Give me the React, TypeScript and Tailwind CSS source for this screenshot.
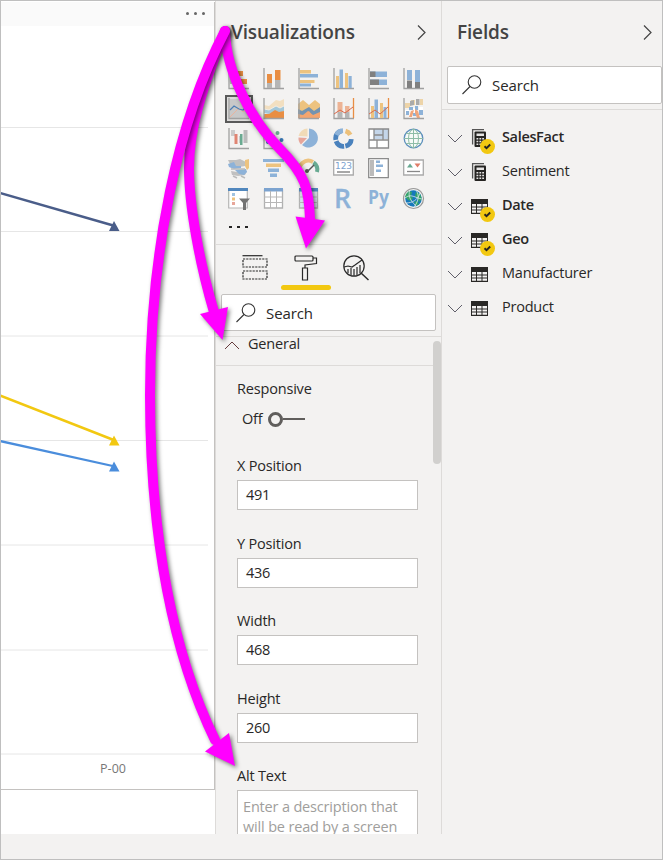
import React from "react";

const AXIS = "M1 0V20.500H21";

function Frame({ children }: { children: React.ReactNode }) {
  return (
    <svg width="22" height="22" viewBox="0 0 22 22" fill="none" className="overflow-visible">
      {children}
    </svg>
  );
}

function Axis() {
  return <path d={AXIS} stroke="#a0a0a0" strokeWidth="1.300" />;
}

const B = "#8db2d8";
const O = "#e98e43";
const Y = "#edc37f";
const G = "#b5b5b5";

const visuals: React.ReactNode[] = [
  <><Axis /><path d="M2 3h13v5H2zM2 11h17v5H2z" fill={O} /><path d="M2 3h6v5H2zM2 11h7v5H2z" fill={G} /></>,
  <><Axis /><path d="M4 6h5v9H4zM12 2h5.500v10H12z" fill={O} /><path d="M4 15h5v5H4zM12 12h5.500v8H12z" fill={G} /></>,
  <><Axis /><path d="M2 2h11v3.500H2zM2 12h14.500v3H2z" fill={Y} /><path d="M2 6h18v3.500H2zM2 15.500h11v3H2z" fill={B} /></>,
  <><Axis /><path d="M3 8h3v12H3zM12 5h3v15h-3z" fill={Y} /><path d="M6.500 1.500H10V20H6.500zM15.500 8h3.200v12h-3.200z" fill={B} /></>,
  <><Axis /><path d="M2 3.500h17V9H2zM2 11.500h17V17H2z" fill={B} /><path d="M2 3.500h5.500V9H2zM2 11.500h9V17H2z" fill="#808080" /></>,
  <><Axis /><path d="M4 2h5v10H4zM12 2h5v12h-5z" fill={B} /><path d="M4 12.500h5V20H4zM12 14h5v6h-5z" fill="#808080" /></>,
  <><path d="M2 1h20v19H2z" fill="#c8c8c8" /><Axis /><path d="M2 19L11 10l4 4 6-7" stroke="#e9b39e" /><path d="M2 12l4-4 5 3 4 1 6-6" stroke="#4c7fb5" strokeWidth="1.200" /></>,
  <><path d="M1 7l5 1 7-6 4 1 4-2v8l-4 2-5-1-6 3-5-1z" fill="#f2dfc0" /><path d="M1 11l5 1 7-4 4 2 4-2v5l-4 2-5-1-6 2-5-1z" fill="#a3c7d8" /><path d="M1 16l5 0 6-4 4 2 5-1v7H1z" fill={O} /><path d="M1 11l5 1 7-4 4 2 4-2" stroke="#f6f3ee" strokeWidth=".8" /><Axis /></>,
  <><path d="M0 6l5-4 6 5 6-5 5 4v11H0z" fill={Y} /><path d="M0 11l4 2 7-4 5 4 6-4v9H0z" fill="#7393b0" /><path d="M0 16l5 1 5-4 5 4 7-3v6H0z" fill="#f4a56e" /><path d="M4 20l7-7 5 7z" fill="#f4a56e" /><Axis /></>,
  <><Axis /><path d="M4.500 4h5v10h-5zM12 8h4.500v6H12z" fill="#edb394" /><path d="M4.500 14h5v6h-5zM12 14h4.500v6H12z" fill={G} /><path d="M20.500 0v20" stroke={O} strokeWidth="1.300" /><path d="M1 16l6-4 5 3 8-6" stroke="#d7694d" /></>,
  <><Axis /><path d="M3 8h3v12H3zM12 5h3v15h-3z" fill={Y} /><path d="M6.500 1.500H10V20H6.500zM15.500 9h3v11h-3z" fill={B} /><path d="M20.500 0v20" stroke={O} strokeWidth="1.300" /><path d="M1 16l6-4 5 4 8-7" stroke="#d7694d" /></>,
  <><path d="M2 5h5v5H2zM8 2h4v5H8zM17 1h3v6h-3z" fill="#edd4a8" /><path d="M7 3l4-1v5L7 8zM13 1h3.500v6H13z" fill="#aaa" /><path d="M2 12h4v4H2zM10 10h4v5h-4zM16 9h4v4h-4zM6 16h4v4H6z" fill="#fff" /><path d="M6 9h4v3H6zM12 8h3v4h-3zM3 13h3v4H3zM16 12h4v5h-4zM10 15h3v3h-3z" fill={B} /><path d="M12 11l3 2 2 7h-3l-2-5zM8 13l3-1-2 7H6z" fill="#f0a57a" /><Axis /></>,
  <><Axis /><path d="M3 2h4v6H3zM11 8h3v7h-3z" fill="#ccc" /><path d="M6.500 6h3v10h-3z" fill="#e08573" /><path d="M15.500 2h4v13h-4z" fill="#bbb" /><path d="M12 6h2.500v11H12z" fill="#6aaa91" /></>,
  <><Axis /><g fill="#3978b6"><circle cx="5" cy="14" r="2" /><circle cx="10" cy="9" r="2" /><circle cx="18.500" cy="12" r="2" /><circle cx="10" cy="17" r="1.500" /></g><circle cx="14.500" cy="5" r="2" fill="#6aaa91" /></>,
  <><path d="M11 10V.500A9.500 9.500 0 1 1 4 17z" fill={B} /><path d="M9.500 8.500V.500A9.500 9.500 0 0 0 .5 8z" fill="#f1dbb7" /><path d="M9 10L.5 9.500A9 9 0 0 0 3 16.500z" fill="#e7a69a" /></>,
  <g fill="none" strokeWidth="4.800">
    <circle cx="10.500" cy="10.500" r="7.800" stroke="#4a82bd" pathLength="100" strokeDasharray="20 2.500 21 2.500 23 2.500 0 28.500" transform="rotate(4 10.500 10.500)" />
    <path d="M3.500 7A7.800 7.800 0 0 1 10 2.700" stroke={B} />
    <path d="M12.500 3A7.800 7.800 0 0 1 17.300 6.800" stroke="#ecc07a" />
  </g>,
  <><path d="M1 1h19v19H1z" fill="#fff" /><path d="M6 1h14v10H6z" fill="#c4d6ea" /><path d="M1 1h19.500v19H1zM6 1v11M1 12h19.500M9 12v8M15 1v11M6 7h9" stroke="#8b8b8b" strokeWidth="1.300" /></>,
  <><circle cx="10.500" cy="10.500" r="9.300" fill="#f7faf8" stroke="#5d8fbe" strokeWidth="1.300" /><path d="M10.500 1v19M1 10.500h19M3 5.500h15M3 15.500h15" stroke="#8ebda7" /><ellipse cx="10.500" cy="10.500" rx="5" ry="9.200" stroke="#8ebda7" /></>,
  <><path d="M0 2h8l4-1 6 3-1 4-6 1-8-1zM3 13l6 1 10-1-2 4-7 1-6-1z" fill="#c0c0c0" /><path d="M0 6l6-2 2 4 5 0v2l-7 1-5-2zM7 12l11-1 1 3-3 3-5-1z" fill={B} /><path d="M17 2l4-1v9l-2 2-2-4z" fill={Y} /><path d="M5 18l4 2M13 18l4 2M3 11h14" stroke="#bbb" strokeWidth="1.500" /></>,
  <><path d="M0 1h21v3H0z" fill={B} /><path d="M3 5.500h15V9H3z" fill={Y} /><path d="M5 10.500h11V14H5zM7 15.500h7V19H7z" fill={B} /></>,
  <><path d="M2 15A9 9 0 0 1 15 4" stroke={Y} strokeWidth="4" /><path d="M15.500 4.500A9 9 0 0 1 19 14" stroke="#68aa92" strokeWidth="4" /><path d="M16 7L9 14" stroke="#555" strokeWidth="1.500" /><circle cx="9" cy="13" r="2" fill="#555" /></>,
  <><path d="M.7 2h19.600v15H.7z" fill="#fff" stroke="#aaa" strokeWidth="1.300" /><text x="2" y="11.300" fontSize="9" letterSpacing="0" fontFamily="DejaVu Sans" fill="#7ca3cf" textLength="17">123</text><path d="M4 14h13" stroke="#777" strokeWidth="1.300" /></>,
  <><path d="M.7.700h19.600v19H.7z" fill="#fff" stroke="#8b8b8b" strokeWidth="1.300" /><path d="M2 2h4v16H2z" fill="#bbb" /><path d="M8 2.500h4V5H8zM8 6.500h7V9H8zM8 11.500h5V14H8z" fill={B} /></>,
  <><path d="M.7 2h19.600v15H.7z" fill="#fff" stroke="#aaa" strokeWidth="1.300" /><path d="M4 9.500l3-4 3 4z" fill="#68aa92" /><path d="M11.500 5.500h6l-3 4z" fill="#df7d68" /><path d="M4 13.500h13" stroke="#888" strokeWidth="1.300" /></>,
  <><path d="M.7 2h18.600v18H.7z" fill="#fff" stroke="#b5b5b5" strokeWidth="1.200" /><path d="M0 0h20v3H0z" fill="#5187bd" /><path d="M4 5h3v3H4z" fill="#9fc2e0" /><path d="M4 9.500h3v3H4z" fill={Y} /><path d="M4 14h3v3H4z" fill="#e7a69a" /><path d="M11 10.500h11L18 15v7h-3v-7z" fill="#737373" /></>,
  <><path d="M1.500 2h18v18h-18z" fill="#fff" stroke="#b1b1b1" strokeWidth="1.300" /><path d="M1 0h19v3.500H1z" fill="#7ca3cf" /><path d="M7.500 3v17M13.500 3v17M1 9h18.500M1 14.500h18.500" stroke="#b7b7b7" /></>,
  <><path d="M1.500 2h18v18h-18z" fill="#dbe5f0" stroke="#b1b1b1" strokeWidth="1.300" /><path d="M1 0h19v3.500H1z" fill="#5187bd" /><path d="M7.500 3v17M13.500 3v17M1 9h18.500M1 14.500h18.500" stroke="#b7b7b7" /></>,
  <text x="1" y="20" fontSize="26.500" letterSpacing="0" fontFamily="Open Sans" fontWeight="600" fill={B} stroke={B} strokeWidth=".3" textLength="17" lengthAdjust="spacingAndGlyphs">R</text>,
  <text x="0" y="16" fontSize="19" letterSpacing="0" fontFamily="Open Sans" fontWeight="700" fill={B} textLength="21" lengthAdjust="spacingAndGlyphs">Py</text>,
  <><circle cx="10.500" cy="10.500" r="10" fill="#f1f3f2" stroke="#999" strokeWidth="1.200" /><circle cx="10.500" cy="10.500" r="8.300" fill="#1678bb" /><path d="M3 6l3-3 3 1-1 4 2 2-2 3-3-1-3-3zM13 4l4 2 2 5-3 3-2-4-2-2zM11 14l3-1 2 3-3 2z" fill="#35a36a" /><path d="M2 10c6-5 10 0 17 1M7 2c-3 7 2 12 7 17M3 15C9 15 15 12 17 5M13 2c4 6 2 12-2 17" stroke="#dce8e8" strokeWidth=".8" /></>,
];

function VisualGrid() {
  return (
    <div className="grid grid-cols-[repeat(6,35px)] auto-rows-[30px] pl-3">
      {visuals.map((v, i) => (
        <div
          key={i}
          className={i === 6 ? "-ml-[3px] -mt-[3px] h-[28px] w-[28px] border-2 border-[#595959] bg-[#dcdbda] pl-px pt-px" : "h-[22px] w-[22px]"}
        >
          <Frame>{v}</Frame>
        </div>
      ))}
    </div>
  );
}

function Chevron({ dir }: { dir: "right" | "down" | "up" }) {
  if (dir === "right")
    return (
      <svg width="9" height="15" viewBox="0 0 9 15" fill="none" stroke="#444" strokeWidth="1.200"><path d="M1 .5l7 7-7 7" /></svg>
    );
  return (
    <svg width="16" height="9" viewBox="0 0 16 9" fill="none" stroke={dir === "up" ? "#653c3c" : "#605f6a"} strokeWidth="1">
      <path d={dir === "up" ? "M1 8l7-7 7 7" : "M1 1l7 7 7-7"} />
    </svg>
  );
}

function SearchBox({ className }: { className: string }) {
  return (
    <div className={"flex items-center rounded-[2px] border border-[#c4c2c0] bg-white pl-[14px] " + className}>
      <svg width="20" height="20" viewBox="0 0 20 20" fill="none" stroke="#333" strokeWidth="1.100">
        <circle cx="12.500" cy="7" r="6.300" /><path d="M8 11.500L.5 19" />
      </svg>
      <span className="ml-[10px] text-[15px] tracking-[-0.1px]">Search</span>
    </div>
  );
}

function PaneHeader({ title, inset }: { title: string; inset: string }) {
  return (
    <div className={"flex h-[62px] items-center justify-between pl-[15px] " + inset}>
      <h2 className="text-[19px] font-semibold tracking-[-0.15px] text-[#444]">{title}</h2>
      <Chevron dir="right" />
    </div>
  );
}

function FormatTabs() {
  return (
    <div className="flex h-[50px] shrink-0 border-t border-[#dddbd9] pl-[15px]">
      <div className="flex w-[50px] justify-center pr-0.5 pt-[10px]">
        <svg width="26" height="26" viewBox="0 0 26 26" fill="none" stroke="#292929" strokeWidth="1.200">
          <path d="M.500 .700h20" /><path d="M1 4h24v8H1zM1 16h24v8H1z" strokeDasharray="2.200 1" />
        </svg>
      </div>
      <div className="flex w-[50px] flex-col items-center pt-[10px]">
        <svg width="24" height="26" viewBox="0 0 24 26" fill="none" stroke="#292929" strokeWidth="1.200">
          <rect x="1" y="1" width="18" height="5" rx="1" /><path d="M19 3h3.500v5.500L11 10v3M8.500 13h5v12h-5z" />
        </svg>
        <div className="mt-1 h-[5px] w-[50px] rounded-full bg-[#f2c811]" />
      </div>
      <div className="flex w-[50px] justify-center pt-[10px]">
        <svg width="26" height="26" viewBox="0 0 26 26" fill="none" stroke="#292929" strokeWidth="1.200">
          <circle cx="11" cy="11" r="10.200" /><path d="M18 18l7.500 7" strokeWidth="1.500" />
          <path d="M1 12l4-1 4 1 3-2 7-5" /><path d="M5 14v4M8 13v7M11 14v7M14 12v8M17 10v8" />
        </svg>
      </div>
    </div>
  );
}

function NumberField({ label, value }: { label: string; value: string }) {
  return (
    <div className="h-[77.600px] shrink-0">
      <div className="h-[25px] leading-[22px]">{label}</div>
      <div className="flex h-[30px] w-[181px] items-center border border-[#c4c2c0] bg-white pl-2 tracking-[-0.3px]">{value}</div>
    </div>
  );
}

function VisualizationsPane() {
  return (
    <section className="flex w-[226px] flex-col overflow-hidden border-l border-[#dddbd9]">
      <PaneHeader title="Visualizations" inset="pr-[15px]" />
      <div className="h-[156px] pt-[5px]"><VisualGrid /></div>
      <div className="flex h-[25px] items-start gap-[5.500px] pl-[13px] pt-[7px]">
        {[0, 1, 2].map((i) => <i key={i} className="h-[2px] w-[2.500px] bg-[#252525]" />)}
      </div>
      <FormatTabs />
      <SearchBox className="ml-[5px] h-[37px] w-[215px] shrink-0" />
      <div className="mt-[5px] flex min-h-0 flex-1 border-t border-[#dddbd9]">
        <div className="w-[217px] shrink-0">
          <div className="flex h-[29px] items-center border-b border-[#dddbd9] pb-[14px] pl-2">
            <span className="mt-[3px]"><Chevron dir="up" /></span><span className="ml-2">General</span>
          </div>
          <div className="flex flex-col pl-[21px] pt-[12px]">
            <div className="h-[77px]">
              <div className="leading-[22px]">Responsive</div>
              <div className="flex items-center pl-[5px] pt-2 leading-[22px]">
                <span className="w-[26px]">Off</span>
                <span className="h-[15px] w-[15px] rounded-full border-[3px] border-[#605e5c]" />
                <span className="h-[2px] w-[22px] bg-[#605e5c]" />
              </div>
            </div>
            <NumberField label="X Position" value="491" />
            <NumberField label="Y Position" value="436" />
            <NumberField label="Width" value="468" />
            <NumberField label="Height" value="260" />
            <div className="h-[25px] leading-[22px]">Alt Text</div>
            <div className="h-[90px] w-[181px] border border-[#c4c2c0] bg-white pl-[5px] pt-[6px] leading-[20px] text-[#a09e9c]">
              <div className="whitespace-nowrap tracking-[-0.17px]">Enter a description that<br />will be read by a screen</div>
            </div>
          </div>
        </div>
        <div className="mt-1 h-[123px] w-2 rounded-full bg-[#d1d0ce]" />
      </div>
    </section>
  );
}

function TableIcon() {
  return (
    <svg width="17" height="15" viewBox="0 0 17 15" className="mt-px"><path d="M0 0h17v15H0z" fill="#292826" /><path d="M1 5h4v2.500H1zM6 5h4.500v2.500H6zM11.500 5h4.500v2.500h-4.500zM1 8.500h4v2H1zM6 8.500h4.500v2H6zM11.500 8.500h4.500v2h-4.500zM1 11.500h4v2.300H1zM6 11.500h4.500v2.300H6zM11.500 11.500h4.500v2.300h-4.500z" fill="#f3f2f1" /></svg>
  );
}

function MeasureIcon() {
  return (
    <svg width="17" height="18" viewBox="0 0 17 18"><path d="M1.600 15.500V.700H13" fill="none" stroke="#555" strokeWidth="1.300" /><rect x="3.500" y="2.500" width="11.500" height="15.500" rx="1" fill="#252422" /><path d="M5.500 4.500H13V7H5.500zM5.500 9h1.800v1.500H5.500zM8.400 9h1.800v1.500H8.400zM11.200 9H13v1.500h-1.800zM5.500 11.700h1.800v1.500H5.500zM8.400 11.700h1.800v1.500H8.400zM11.200 11.700H13v1.500h-1.800zM5.500 14.500h1.800V16H5.500zM8.400 14.500h1.800V16H8.400zM11.200 14.500H13V16h-1.800z" fill="#e5e4e3" /></svg>
  );
}

const tables = [
  { name: "SalesFact", measure: true, used: true },
  { name: "Sentiment", measure: true, used: false },
  { name: "Date", measure: false, used: true },
  { name: "Geo", measure: false, used: true },
  { name: "Manufacturer", measure: false, used: false },
  { name: "Product", measure: false, used: false },
];

function FieldsPane() {
  return (
    <section className="flex-1 border-l border-[#dddbd9]">
      <PaneHeader title="Fields" inset="pr-[10px]" />
      <SearchBox className="ml-[5px] mt-[3px] h-[38px] w-[215px]" />
      <div className="mt-[5px] border-t border-[#dddbd9] pt-[11px]">
        {tables.map((t) => (
          <div key={t.name} className="flex h-[34px] items-center pl-[5px]">
            <Chevron dir="down" />
            <div className="relative ml-2 flex h-[18px] w-[17px] items-center justify-center">
              {t.measure ? <MeasureIcon /> : <TableIcon />}
              {t.used && (
                <svg className="absolute left-[9px] top-[10px]" width="15" height="15" viewBox="0 0 15 15">
                  <circle cx="7.500" cy="7.500" r="7.500" fill="#f2c811" /><path d="M4.500 7.300L6.500 9.200l3.700-3.700" fill="none" stroke="#252422" strokeWidth="1.900" />
                </svg>
              )}
            </div>
            <span className={"-mt-[3px] ml-[14px] " + (t.used ? "font-semibold tracking-[-0.35px]" : "tracking-[-0.22px]")}>{t.name}</span>
          </div>
        ))}
      </div>
    </section>
  );
}

function ChartCanvas() {
  return (
    <section className="w-[214px] bg-white">
      <div className="mt-px h-[788px] border-b border-r border-[#c4c2c0]">
        <div className="flex h-6 items-start justify-end gap-[5px] bg-[#fafafa] pr-[9px] pt-[10px]">
          {[0, 1, 2].map((i) => <i key={i} className="h-[3px] w-[3px] rounded-full bg-[#666]" />)}
        </div>
        <svg width="213" height="735" viewBox="1 26 213 735" className="block">
          {[127.500, 231.500, 336, 440.500, 545, 650, 754].map((y) => <path key={y} d={`M1 ${y}H208`} stroke="#e6e6e6" />)}
          <g fill="none" strokeWidth="2.500"><path d="M0 193L115 226" stroke="#4a5d89" /><path d="M0 395.500L115 440.500" stroke="#f2c811" /><path d="M0 441L115 466.500" stroke="#4a8ddc" strokeWidth="2.300" /></g>
          <path d="M109 231l5-10 5.500 10z" fill="#4a5d89" /><path d="M109 445.500l5-10 5.500 10z" fill="#f2c811" /><path d="M109 471.500l5-10 5.500 10z" fill="#4a8ddc" />
        </svg>
        <div className="pl-[99px] text-[12.500px] leading-[16px] tracking-[0.05px] text-[#777]">P-00</div>
      </div>
    </section>
  );
}

function Arrows() {
  return (
    <svg className="pointer-events-none absolute inset-0" width="663" height="860" viewBox="0 0 663 860" fill="none" stroke="#ff00ff" strokeWidth="10" strokeLinecap="round">
      <g className="drop-shadow-[2px_2px_2px_rgba(0,0,0,0.5)]">
        <path d="M225 31C201 90 189 130 189 168S200 265 214 312" />
        <path d="M200 314l28-7-5.500 33z" fill="#ff00ff" stroke="none" />
      </g>
      <g className="drop-shadow-[2px_2px_2px_rgba(0,0,0,0.5)]">
        <path d="M225 31C226 72 252 121 279 148S309 190 310 219" />
        <path d="M295.500 216.500l29.500 4-19 28z" fill="#ff00ff" stroke="none" />
      </g>
      <g className="drop-shadow-[2px_2px_2px_rgba(0,0,0,0.5)]">
        <path d="M225 31C178 120 150 250 150 395S174 656 215 740" />
        <path d="M205 751.500l24-18.500 6 33z" fill="#ff00ff" stroke="none" />
      </g>
    </svg>
  );
}

export default function App() {
  return (
    <main className="relative h-[860px] w-[663px] overflow-hidden border border-[#bfbfbf] bg-[#f3f2f1] font-['Open_Sans','Noto_Sans',sans-serif] text-[14.500px] leading-[20px] tracking-[-0.18px] text-[#292827]">
      <div className="flex h-[833px]">
        <ChartCanvas />
        <VisualizationsPane />
        <FieldsPane />
      </div>
      <div className="absolute -left-px -top-px"><Arrows /></div>
    </main>
  );
}
